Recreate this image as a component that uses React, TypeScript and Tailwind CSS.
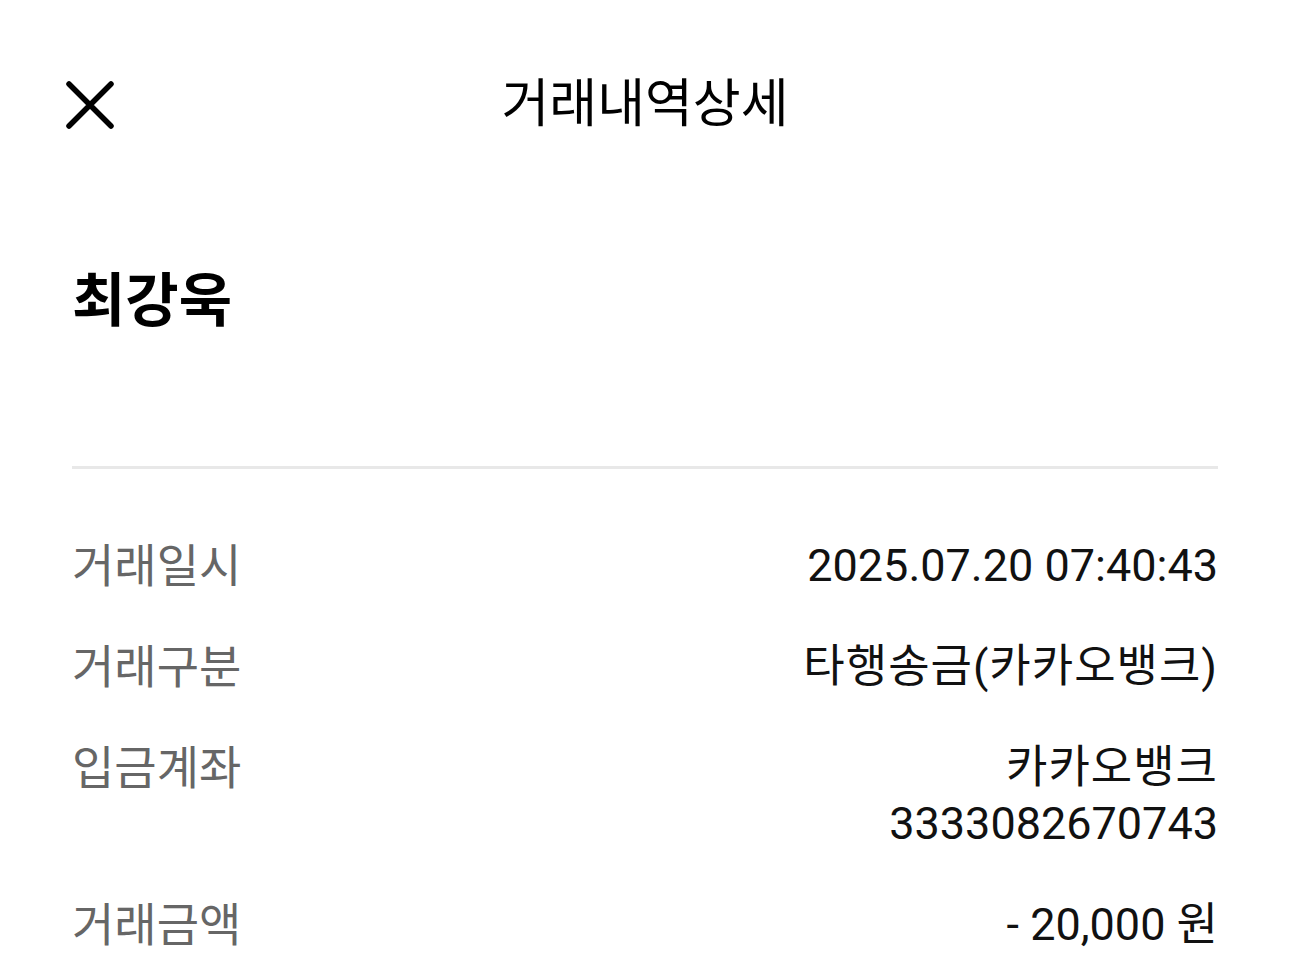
const rows: { label: string; value: string[] }[] = [
    {label: "거래일시", value: ["2025.07.20 07:40:43"]},
    {label: "거래구분", value: ["타행송금(카카오뱅크)"]},
    {label: "입금계좌", value: ["카카오뱅크", "3333082670743"]},
    {label: "거래금액", value: ["- 20,000 원"]},
]

const isHangul = (s: string) => /[가-힣]/.test(s)

const CloseIcon = () => (
    <svg width="50" height="50" viewBox="0 0 50 50" fill="none">
        <path d="M4 4L46 46M46 4L4 46" stroke="#000" strokeWidth="5.5" strokeLinecap="round"/>
    </svg>
)

export default function App() {
    return <div
        className="min-h-[978px] bg-white text-black px-[72px]"
        style={{fontFamily: "Roboto, 'Noto Sans CJK KR', sans-serif"}}>
        <header className="relative flex items-center justify-center h-[210px]">
            <button className="absolute left-[-7px] top-[80px] p-0">
                <CloseIcon/>
            </button>
            <h1 className="text-[52px] leading-none font-normal">거래내역상세</h1>
        </header>

        <h2 className="mt-[62px] text-[58px] leading-none font-bold">최강욱</h2>

        <div className="mt-[136px] h-[3px] bg-[#e8e8e8]"/>

        <div className="mt-[69px] flex flex-col gap-[45px]">
            {rows.map(row => (
                <div key={row.label} className="flex items-start justify-between leading-[56px]">
                    <span className="text-[46px] text-[#666666]">{row.label}</span>
                    <div className="flex flex-col items-end text-[45px] text-[#111111]">
                        {row.value.map(v => (
                            <span key={v} className={isHangul(v) && !v.includes("원") ? "tracking-[1px]" : ""}>{v}</span>
                        ))}
                    </div>
                </div>
            ))}
        </div>
    </div>
}
